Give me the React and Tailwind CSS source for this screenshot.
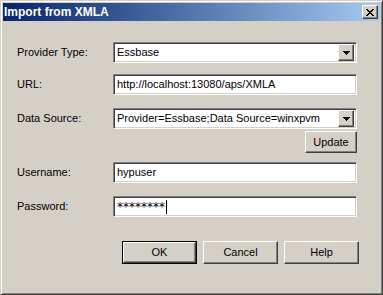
import React from "react";

const sunken =
  "border border-t-[#808080] border-l-[#808080] border-b-white border-r-white shadow-[inset_1px_1px_#404040,inset_-1px_-1px_#d4d0c8] bg-white";
const raised =
  "border border-t-white border-l-white border-b-[#404040] border-r-[#404040] shadow-[inset_-1px_-1px_#808080] bg-[#d4d0c8]";

const ArrowButton = () => (
  <div className={`w-[16px] h-[17px] flex items-center justify-center ${raised}`}>
    <svg width="7" height="4" viewBox="0 0 7 4" shapeRendering="crispEdges">
      <rect x="0" y="0" width="7" height="1" fill="#000" />
      <rect x="1" y="1" width="5" height="1" fill="#000" />
      <rect x="2" y="2" width="3" height="1" fill="#000" />
      <rect x="3" y="3" width="1" height="1" fill="#000" />
    </svg>
  </div>
);

const CloseGlyph = () => {
  const rows = ["11000011", "01100110", "00111100", "00011000", "00111100", "01100110", "11000011"];
  return (
    <svg width="8" height="7" viewBox="0 0 8 7" shapeRendering="crispEdges">
      {rows.map((r, y) =>
        r.split("").map((c, x) => (c === "1" ? <rect key={`${x}-${y}`} x={x} y={y} width="1" height="1" fill="#000" /> : null))
      )}
    </svg>
  );
};

const Row = ({ label, mt, children }) => (
  <div className={`flex items-center ${mt}`}>
    <div className="w-[110px] pl-[14px]">{label}</div>
    <div className="w-[244px]">{children}</div>
  </div>
);

const Combo = ({ value }) => (
  <div className={`h-[21px] flex items-center pl-[3px] pr-[2px] ${sunken}`}>
    <span className="flex-1 whitespace-nowrap overflow-hidden">{value}</span>
    <ArrowButton />
  </div>
);

const TextBox = ({ children }) => (
  <div className={`h-[21px] flex items-center pl-[3px] ${sunken}`}>{children}</div>
);

const Button = ({ children, isDefault }) => (
  <div className={isDefault ? "border border-black" : ""}>
    <div
      className={`flex items-center justify-center ${raised} ${
        isDefault ? "w-[73px] h-[21px]" : "w-[75px] h-[23px]"
      }`}
    >
      {children}
    </div>
  </div>
);

export default function App() {
  return (
    <div
      className={`w-[383px] h-[295px] bg-[#d4d0c8] border border-t-[#d4d0c8] border-l-[#d4d0c8] border-b-[#404040] border-r-[#404040] shadow-[inset_1px_1px_white,inset_-1px_-1px_#808080] p-[2px] font-['Liberation_Sans',sans-serif] text-[11px] text-black`}
    >
      <div className="h-[18px] flex items-center justify-between bg-gradient-to-r from-[#0a246a] to-[#a6caf0] pl-[1px] pr-[2px]">
        <span className="text-white font-bold text-[12px]">Import from XMLA</span>
        <div className={`w-[16px] h-[14px] flex items-center justify-center ${raised}`}>
          <CloseGlyph />
        </div>
      </div>

      <div className="flex flex-col">
        <Row label="Provider Type:" mt="mt-[21px]">
          <Combo value="Essbase" />
        </Row>
        <Row label="URL:" mt="mt-[11px]">
          <TextBox>http://localhost:13080/aps/XMLA</TextBox>
        </Row>
        <Row label="Data Source:" mt="mt-[13px]">
          <Combo value="Provider=Essbase;Data Source=winxpvm" />
        </Row>
        <div className="flex justify-end w-[354px] mt-[2px]">
          <div className={`w-[52px] h-[22px] flex items-center justify-center ${raised}`}>Update</div>
        </div>
        <Row label="Username:" mt="mt-[9px]">
          <TextBox>hypuser</TextBox>
        </Row>
        <Row label="Password:" mt="mt-[13px]">
          <TextBox>
            <span className="font-['DejaVu_Sans',sans-serif] text-[12px]">********</span>
            <span className="inline-block w-[1px] h-[14px] bg-black ml-[1px]" />
          </TextBox>
        </Row>
        <div className="flex gap-[6px] pl-[119px] mt-[24px]">
          <Button isDefault>OK</Button>
          <Button>Cancel</Button>
          <Button>Help</Button>
        </div>
      </div>
    </div>
  );
}
